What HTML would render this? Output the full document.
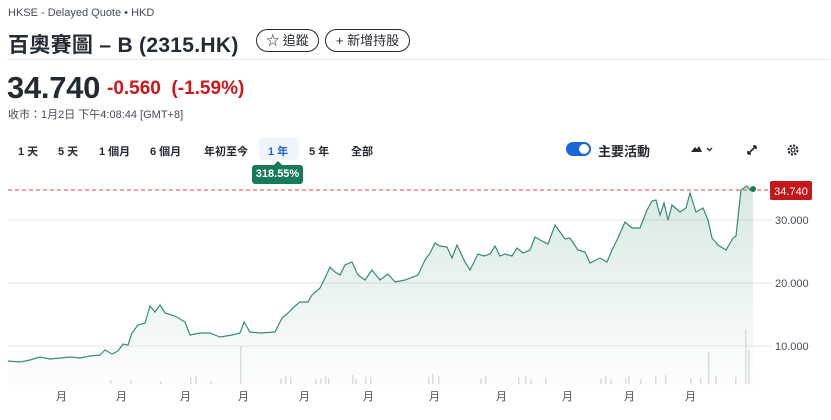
<!DOCTYPE html>
<html><head><meta charset="utf-8"><style>
body{margin:0;width:831px;height:420px;background:#fff;font-family:"Liberation Sans","Noto Sans CJK TC",sans-serif;color:#232a31;overflow:hidden;position:relative}
.a{position:absolute;white-space:nowrap}
.btn{position:absolute;white-space:nowrap;border:1px solid #232a31;border-radius:12px;line-height:21px;font-size:13px;text-align:center;box-sizing:border-box;height:23px}
.tab{position:absolute;top:143px;font-size:11px;font-weight:bold;color:#232a31}
</style></head><body>
<div class="a" style="left:8px;top:7px;font-size:11px;color:#464e56">HKSE - Delayed Quote • HKD</div>
<div class="a" style="left:8px;top:29px;font-size:21px;font-weight:bold;letter-spacing:0.3px">百奧賽圖 – B (2315.HK)</div>
<div class="btn" style="left:256px;top:29px;width:63px">☆ 追蹤</div>
<div class="btn" style="left:325px;top:29px;width:85px">+ 新增持股</div>
<div class="a" style="left:7px;top:59px;width:831px;border-top:1px solid #e5e7eb"></div>
<div class="a" style="left:7px;top:70px;font-size:31px;font-weight:bold;letter-spacing:-0.3px">34.740</div>
<div class="a" style="left:107px;top:78px;font-size:19px;font-weight:bold;color:#d0161a">-0.560 &nbsp;(-1.59%)</div>
<div class="a" style="left:8px;top:106px;font-size:11px;color:#464e56">收市：1月2日 下午4:08:44 [GMT+8]</div>
<div class="tab" style="left:18px">1 天</div>
<div class="tab" style="left:58px">5 天</div>
<div class="tab" style="left:99px">1 個月</div>
<div class="tab" style="left:150px">6 個月</div>
<div class="tab" style="left:204px">年初至今</div>
<div class="a" style="left:259px;top:138px;width:40px;height:22px;background:#f0f5fc;border-radius:4px"></div>
<div class="tab" style="left:268px;color:#1a66d6">1 年</div>
<div class="tab" style="left:309px">5 年</div>
<div class="tab" style="left:351px">全部</div>
<div class="a" style="left:252px;top:165px;width:51px;height:19px;background:#167a5b;border-radius:3px;color:#fff;font-size:11px;font-weight:bold;line-height:19px;text-align:center">318.55%</div>
<div class="a" style="left:274px;top:161px;width:0;height:0;border-left:4px solid transparent;border-right:4px solid transparent;border-bottom:4px solid #167a5b"></div>
<div class="a" style="left:566px;top:142px;width:25px;height:14px;background:#1a66d6;border-radius:7px"><div style="position:absolute;right:2px;top:2px;width:10px;height:10px;border-radius:5px;background:#fff"></div></div>
<div class="a" style="left:598px;top:141px;font-size:13px;font-weight:bold">主要活動</div>
<svg class="a" style="left:688px;top:143px" width="30" height="12"><path d="M3 9 L7 4 L9 6 L11 3 L14 9Z" fill="#232a31"/><path d="M19 5 L21.5 7.5 L24 5" stroke="#232a31" fill="none" stroke-width="1.3"/></svg>
<svg class="a" style="left:745px;top:143px" width="14" height="14"><path d="M3 11 L11 3 M3 11 v-3 M3 11 h3 M11 3 h-3 M11 3 v3" stroke="#232a31" stroke-width="1.6" fill="none"/></svg>
<svg class="a" style="left:786px;top:143px" width="14" height="14"><circle cx="7" cy="7" r="4.5" fill="none" stroke="#232a31" stroke-width="2" stroke-dasharray="2.2 1.3"/><circle cx="7" cy="7" r="2" fill="none" stroke="#232a31" stroke-width="1.2"/></svg>
<svg class="a" style="left:0;top:0" width="831" height="420">
<defs><linearGradient id="g" x1="0" y1="0" x2="0" y2="1"><stop offset="0" stop-color="#167a5b" stop-opacity="0.17"/><stop offset="1" stop-color="#167a5b" stop-opacity="0.01"/></linearGradient></defs>
<g stroke="#e3e5e8" stroke-width="1"><line x1="8" y1="220" x2="772" y2="220"/><line x1="8" y1="283" x2="772" y2="283"/><line x1="8" y1="346" x2="772" y2="346"/></g>
<path d="M8,361 L20,362 L30,360 L40,357 L50,359 L60,358 L70,357 L80,358 L90,356 L100,355 L105,350 L112,354 L118,351 L123,344 L128,345 L132,333 L138,325 L145,323 L150,306 L155,312 L160,305 L165,313 L175,316 L185,322 L190,335 L200,333 L210,333 L220,337 L232,335 L240,333 L244,322 L250,332 L260,333 L275,332 L282,318 L288,313 L295,306 L300,302 L308,302 L312,295 L320,288 L325,278 L330,267 L335,272 L340,275 L345,265 L352,262 L358,275 L365,280 L372,270 L380,280 L388,274 L395,282 L405,280 L418,275 L425,260 L430,253 L435,243 L440,246 L447,247 L452,258 L457,245 L465,262 L470,270 L478,254 L484,256 L490,254 L495,246 L500,256 L505,254 L512,256 L517,248 L523,253 L530,250 L535,237 L542,241 L548,244 L555,225 L560,232 L565,239 L570,238 L578,250 L585,252 L590,263 L600,258 L607,262 L612,250 L618,238 L625,222 L632,228 L640,228 L647,210 L652,201 L656,200 L660,215 L664,203 L668,220 L672,205 L680,212 L686,208 L690,193 L696,212 L703,208 L708,220 L712,238 L718,245 L726,250 L733,238 L736,236 L741,190 L747,186 L750,190 L753,189" fill="none" stroke="#167a5b" stroke-width="1.2" stroke-opacity="0.85"/>
<path d="M8,361 L20,362 L30,360 L40,357 L50,359 L60,358 L70,357 L80,358 L90,356 L100,355 L105,350 L112,354 L118,351 L123,344 L128,345 L132,333 L138,325 L145,323 L150,306 L155,312 L160,305 L165,313 L175,316 L185,322 L190,335 L200,333 L210,333 L220,337 L232,335 L240,333 L244,322 L250,332 L260,333 L275,332 L282,318 L288,313 L295,306 L300,302 L308,302 L312,295 L320,288 L325,278 L330,267 L335,272 L340,275 L345,265 L352,262 L358,275 L365,280 L372,270 L380,280 L388,274 L395,282 L405,280 L418,275 L425,260 L430,253 L435,243 L440,246 L447,247 L452,258 L457,245 L465,262 L470,270 L478,254 L484,256 L490,254 L495,246 L500,256 L505,254 L512,256 L517,248 L523,253 L530,250 L535,237 L542,241 L548,244 L555,225 L560,232 L565,239 L570,238 L578,250 L585,252 L590,263 L600,258 L607,262 L612,250 L618,238 L625,222 L632,228 L640,228 L647,210 L652,201 L656,200 L660,215 L664,203 L668,220 L672,205 L680,212 L686,208 L690,193 L696,212 L703,208 L708,220 L712,238 L718,245 L726,250 L733,238 L736,236 L741,190 L747,186 L750,190 L753,189 L753,386 L8,386Z" fill="url(#g)"/>
<line x1="8" y1="190" x2="770" y2="190" stroke="#e8706f" stroke-width="1.2" stroke-dasharray="4 3"/>
<circle cx="753" cy="189" r="3" fill="#167a5b"/>
<g fill="#d8dbdf">
<rect x="240" y="346" width="1.5" height="38"/><rect x="708" y="352" width="1.5" height="32"/><rect x="745" y="330" width="1.5" height="54"/><rect x="748" y="350" width="1.5" height="34"/>
<rect x="110" y="380" width="1.5" height="4"/><rect x="130" y="380" width="1.5" height="4"/><rect x="160" y="381" width="1.5" height="3"/><rect x="190" y="377" width="1.5" height="7"/><rect x="195" y="376" width="1.5" height="8"/><rect x="210" y="381" width="1.5" height="3"/>
<rect x="280" y="378" width="1.5" height="6"/><rect x="285" y="376" width="1.5" height="8"/><rect x="290" y="377" width="1.5" height="7"/><rect x="315" y="379" width="1.5" height="5"/><rect x="320" y="378" width="1.5" height="6"/><rect x="325" y="376" width="1.5" height="8"/><rect x="328" y="378" width="1.5" height="6"/>
<rect x="352" y="375" width="1.5" height="9"/><rect x="355" y="379" width="1.5" height="5"/><rect x="365" y="377" width="1.5" height="7"/><rect x="370" y="377" width="1.5" height="7"/><rect x="428" y="377" width="1.5" height="7"/><rect x="432" y="374" width="1.5" height="10"/><rect x="438" y="376" width="1.5" height="8"/>
<rect x="480" y="378" width="1.5" height="6"/><rect x="485" y="376" width="1.5" height="8"/><rect x="518" y="377" width="1.5" height="7"/><rect x="525" y="376" width="1.5" height="8"/><rect x="530" y="379" width="1.5" height="5"/><rect x="545" y="378" width="1.5" height="6"/>
<rect x="600" y="378" width="1.5" height="6"/><rect x="605" y="376" width="1.5" height="8"/><rect x="610" y="379" width="1.5" height="5"/><rect x="625" y="378" width="1.5" height="6"/><rect x="628" y="376" width="1.5" height="8"/><rect x="640" y="379" width="1.5" height="5"/><rect x="655" y="376" width="1.5" height="8"/><rect x="665" y="375" width="1.5" height="9"/><rect x="690" y="378" width="1.5" height="6"/><rect x="700" y="378" width="1.5" height="6"/><rect x="715" y="376" width="1.5" height="8"/><rect x="735" y="377" width="1.5" height="7"/>
</g>
<g font-size="11" fill="#464e56" font-family="Liberation Sans,Noto Sans CJK TC,sans-serif">
<text x="775" y="224">30.000</text><text x="775" y="287">20.000</text><text x="775" y="350">10.000</text>
<text x="56" y="400">月</text><text x="116" y="400">月</text><text x="180" y="400">月</text><text x="238" y="400">月</text><text x="299" y="400">月</text><text x="363" y="400">月</text><text x="429" y="400">月</text><text x="496" y="400">月</text><text x="562" y="400">月</text><text x="624" y="400">月</text><text x="685" y="400">月</text>
</g>
<rect x="770" y="181" width="42" height="19" rx="2" fill="#c4171b"/>
<text x="791" y="195" font-size="11" fill="#fff" text-anchor="middle" font-family="Liberation Sans,sans-serif">34.740</text>
</svg>
</body></html>
